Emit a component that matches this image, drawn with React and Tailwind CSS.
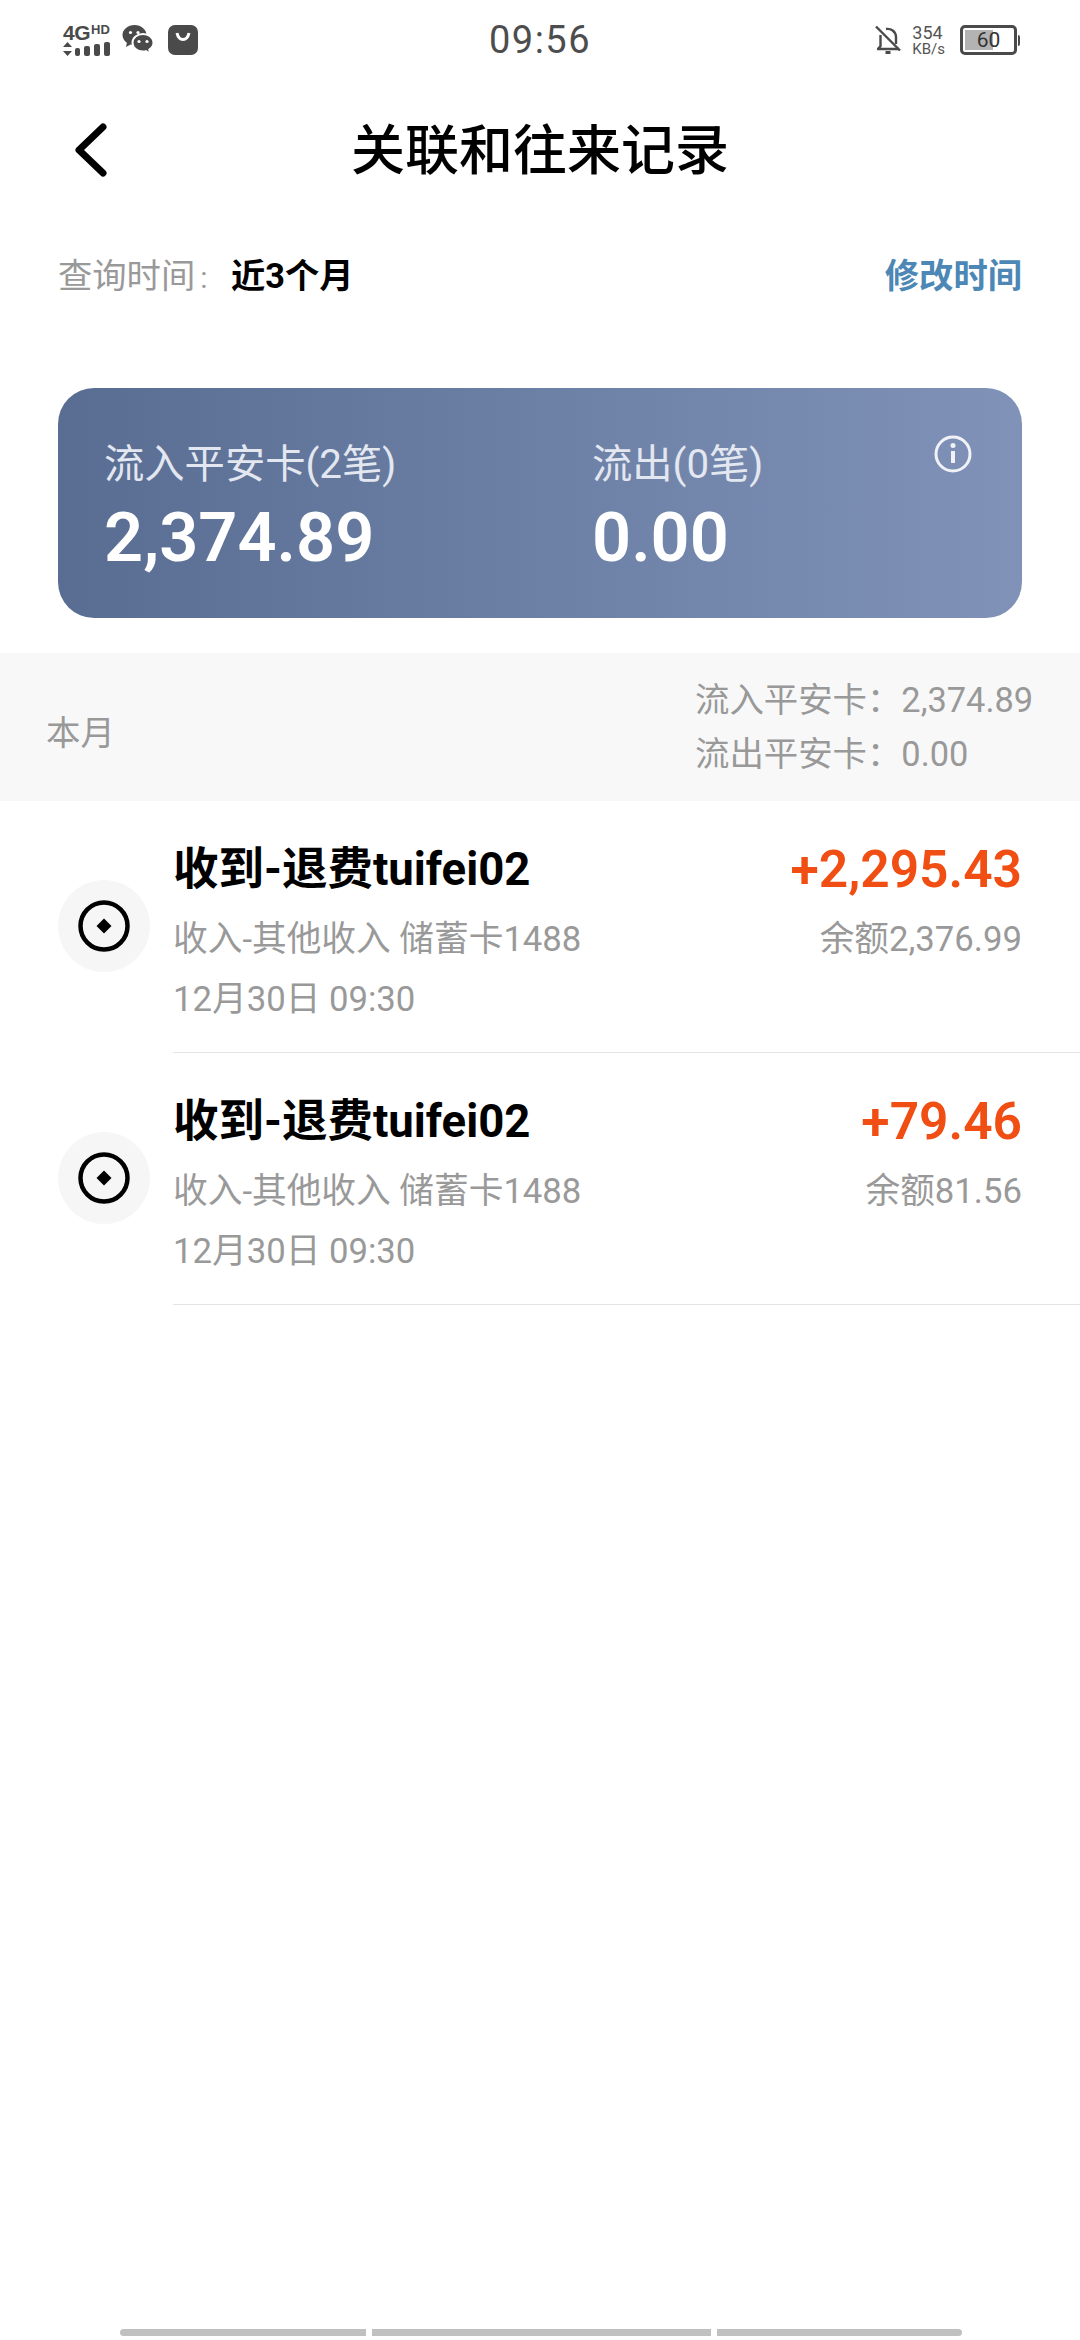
const cjk = { fontFamily: 'Roboto, "Noto Sans CJK SC", sans-serif' };

function Signal() {
  return (
    <div className="flex w-[48px] flex-col text-[#4a4a4a]">
      <div className="flex h-[18px] items-start font-bold leading-none" style={{ fontFamily: '"Liberation Sans", sans-serif' }}>
        <span className="text-[21px] leading-[18px] tracking-[-0.5px]">4G</span>
        <span className="ml-[1px] text-[13px] leading-[12px]">HD</span>
      </div>
      <svg width="48" height="14" viewBox="0 0 48 14" fill="#4a4a4a">
        <path d="M4.500 0l4.500 5H0zM4.500 14L0 9h9z" />
        <rect x="12" y="6" width="5" height="8" rx="2" />
        <rect x="21" y="4" width="6" height="10" rx="2" />
        <rect x="31" y="2" width="6" height="12" rx="2" />
        <rect x="41" y="0" width="6" height="14" rx="2" />
      </svg>
    </div>
  );
}

function WeChat() {
  return (
    <svg width="32" height="32" viewBox="0 0 32 32">
      <path fill="#4a4a4a" d="M12.500 1C5.900 1 .5 5.500.5 11c0 3.100 1.700 5.800 4.400 7.700L4 23l4.600-2.600c1.200.4 2.600.6 3.900.6 6.600 0 12-4.500 12-10S19.100 1 12.500 1z" />
      <path fill="#4a4a4a" stroke="#fff" strokeWidth="2" d="M21 10c-5.800 0-10.500 3.900-10.500 8.800s4.700 8.700 10.500 8.700c1 0 2-.1 3-.4l4.300 2.900-1-4.300c2.500-1.600 4.200-4.100 4.200-6.900C31.500 13.900 26.800 10 21 10z" />
      <circle cx="8.500" cy="8.500" r="1.600" fill="#fff" />
      <circle cx="16" cy="8.500" r="1.600" fill="#fff" />
      <circle cx="17" cy="17.500" r="1.600" fill="#fff" />
      <circle cx="25" cy="17.500" r="1.600" fill="#fff" />
    </svg>
  );
}

function Bag() {
  return (
    <div className="flex h-[30px] w-[30px] items-start justify-center rounded-[7px] bg-[#4a4a4a]">
      <svg width="18" height="14" viewBox="0 0 18 14" className="mt-[7px]">
        <path d="M3 1c1 4.500 3.500 6.500 6 6.500S14 5.500 15 1" fill="none" stroke="#fff" strokeWidth="3" />
      </svg>
    </div>
  );
}

function BellOff() {
  return (
    <svg width="28" height="30" viewBox="0 0 28 30" fill="none" stroke="#4a4a4a" strokeWidth="2.400">
      <path d="M3 24h22M4 24l2.500-3V10M12 4c5-.8 9.500 2.500 10 7.500V19" />
      <path d="M2 1.500l24 24" />
      <path d="M11.500 27.500h5" strokeWidth="3" />
    </svg>
  );
}

function Battery() {
  return (
    <div className="flex items-center">
      <div className="relative h-[30px] w-[57px] overflow-hidden rounded-[5px] border-[3px] border-[#4a4a4a] bg-white p-[2px]">
        <div className="h-full w-[60%] bg-[#b3b3b3]" />
        <span className="absolute inset-0 flex items-center justify-center text-[21px] leading-none text-[#333]" style={{ fontFamily: 'Roboto, sans-serif' }}>60</span>
      </div>
      <div className="ml-[1px] h-[11px] w-[2px] rounded-r bg-[#4a4a4a]" />
    </div>
  );
}

function StatusBar() {
  return (
    <div className="grid h-[80px] grid-cols-[1fr_auto_1fr] items-center px-[60px]">
      <div className="flex items-center pl-[3px]">
        <Signal />
        <div className="ml-[11px]"><WeChat /></div>
        <div className="ml-[14px]"><Bag /></div>
      </div>
      <div className="text-[38px] leading-none tracking-[1.500px] text-[#4d4d4d]" style={{ fontFamily: 'Roboto, sans-serif' }}>09:56</div>
      <div className="flex items-center justify-end">
        <BellOff />
        <div className="ml-[10px] mr-[15px] flex flex-col text-[#555]" style={{ fontFamily: 'Roboto, sans-serif' }}>
          <span className="text-[18px] leading-[18px]">354</span>
          <span className="text-[15px] leading-[15px]">KB/s</span>
        </div>
        <Battery />
      </div>
    </div>
  );
}

function Coin() {
  return (
    <div className="mb-[3px] flex h-[92px] w-[92px] shrink-0 items-center justify-center rounded-full bg-[#f6f6f6]">
      <svg width="54" height="54" viewBox="0 0 54 54">
        <circle cx="27" cy="27" r="23.500" fill="none" stroke="#000" strokeWidth="4.500" />
        <path d="M27 19.500l7.500 7.500-7.500 7.500-7.500-7.500z" fill="#000" />
      </svg>
    </div>
  );
}

function Row({ amount, balance }) {
  return (
    <div className="flex h-[252px] items-center pl-[58px]">
      <Coin />
      <div className="ml-[23px] flex h-full flex-1 justify-between border-b border-[#e4e4e4] pr-[58px] pt-[38px]">
        <div>
          <div className="text-[45.500px] font-bold leading-[62px] text-black">收到-退费tuifei02</div>
          <div className="mt-[8px] text-[34.700px] leading-[60px] text-[#999]">收入-其他收入 储蓄卡1488</div>
          <div className="text-[34.700px] leading-[60px] text-[#999]">12月30日 09:30</div>
        </div>
        <div className="text-right">
          <div className="text-[51.500px] font-semibold leading-[62px] text-[#f04e13]">{amount}</div>
          <div className="mt-[8px] text-[34.700px] leading-[60px] text-[#999]">{balance}</div>
        </div>
      </div>
    </div>
  );
}

export default function App() {
  return (
    <div className="flex h-[2340px] w-[1080px] flex-col overflow-hidden bg-white" style={cjk}>
      <StatusBar />
      <div className="relative mt-[17px] flex h-[110px] items-center justify-center">
        <svg className="absolute left-[71px] top-[25px]" width="38" height="56" viewBox="0 0 38 56" fill="none" stroke="#000" strokeWidth="7" strokeLinecap="round" strokeLinejoin="round">
          <path d="M32 5L8 28l24 23" />
        </svg>
        <h1 className="text-[54px] font-medium leading-none text-black">关联和往来记录</h1>
      </div>
      <div className="mt-[45px] flex h-[50px] items-center justify-between px-[58px]">
        <div className="flex items-center text-[34.300px]">
          <span className="w-[173px] text-[#999]">查询时间<span className="ml-[5px] text-[30px]">:</span></span>
          <span className="font-bold text-black">近3个月</span>
        </div>
        <span className="text-[34.300px] font-bold text-[#4c87b5]">修改时间</span>
      </div>
      <div className="mx-[58px] mt-[86px] flex h-[230px] shrink-0 rounded-[36px] bg-gradient-to-r from-[#596d93] to-[#8092b8] pl-[46px] pt-[54px]">
        <div className="w-[488px]">
          <div className="text-[40.300px] leading-[46px] text-[#e3e7f0]">流入平安卡(2笔)</div>
          <div className="mt-[12px] text-[68.500px] font-semibold leading-[76px] text-white">2,374.89</div>
        </div>
        <div className="flex-1">
          <div className="text-[40.300px] leading-[46px] text-[#e3e7f0]">流出(0笔)</div>
          <div className="mt-[12px] text-[68.500px] font-semibold leading-[76px] text-white">0.00</div>
        </div>
        <svg className="mr-[50px] -mt-[7px]" width="38" height="38" viewBox="0 0 38 38" fill="none" stroke="#f0f2f7" strokeWidth="3">
          <circle cx="19" cy="19" r="17" />
          <path d="M19 16v12" strokeWidth="4" />
          <circle cx="19" cy="10.500" r="2.500" fill="#f0f2f7" stroke="none" />
        </svg>
      </div>
      <div className="mt-[35px] flex h-[148px] shrink-0 items-center justify-between bg-[#f8f8f8] pl-[46px] pr-[46px] text-[34.400px] text-[#999]">
        <span className="pt-[14px]">本月</span>
        <div className="w-[339px] leading-[54px]">
          <div>流入平安卡：2,374.89</div>
          <div>流出平安卡：0.00</div>
        </div>
      </div>
      <Row amount="+2,295.43" balance="余额2,376.99" />
      <Row amount="+79.46" balance="余额81.56" />
      <div className="mb-[4px] mt-auto flex justify-center gap-[6px] pl-[2px]">
        <div className="h-[7px] w-[246px] rounded-l-full bg-[#c0c0c0]" />
        <div className="h-[7px] w-[339px] bg-[#c0c0c0]" />
        <div className="h-[7px] w-[245px] rounded-r-full bg-[#c0c0c0]" />
      </div>
    </div>
  );
}
